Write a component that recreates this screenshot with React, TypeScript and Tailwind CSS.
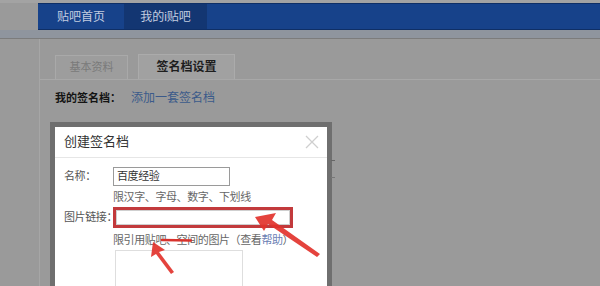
import React from 'react';

const font = { fontFamily: '"Liberation Sans", "Noto Sans CJK SC", sans-serif' };

const Arrows: React.FC = () => (
  <svg className="absolute left-0 top-0 pointer-events-none" width="600" height="286" viewBox="0 0 600 286">
    {/* arrow to the image link input */}
    <path d="M255 217 L276 213 L272 220 L320 254 L317 257 L268 224 L264 231 Z" fill="#e2332c" opacity="0.92" />
    {/* arrow to the hint text */}
    <path d="M153 242 L165 250 L159 252 L174 272 L171 274 L156 254 L151 257 Z" fill="#e2332c" opacity="0.92" />
    {/* strike over the word */}
    <path d="M162 240 L191 240.5" stroke="#d8322c" strokeWidth="2.4" fill="none" strokeLinecap="round" />
  </svg>
);

const App: React.FC = () => {
  return (
    <div className="relative w-[600px] h-[286px] overflow-hidden bg-[#9a9a9a]" style={font}>
      {/* top nav */}
      <div className="h-[3px] bg-[#a3a3a3]" />
      <div className="flex h-[27px] ml-[38px] bg-[#17428a] border-y border-[#0f2f66]">
        <div className="w-[86px] flex items-center justify-center text-[12px] text-[#c3cde0]">贴吧首页</div>
        <div className="w-[83px] flex items-center justify-center text-[12px] text-[#c3cde0] bg-[#133672]">我的i贴吧</div>
      </div>
      <div className="h-[9px] bg-[#8f959e] border-b border-[#7c7c7c]" />

      {/* page content */}
      <div className="ml-[39px] h-full border-l border-[#a6a6a6] pt-[16px]">
        <div className="flex items-end pl-[15px] h-[25px] border-b border-[#a8a8a8] gap-[10px]">
          <div className="w-[73px] h-[24px] flex items-center justify-center bg-[#9d9d9d] border border-b-0 border-[#a9a9a9] text-[11px] text-[#7a7a7a]">
            基本资料
          </div>
          <div className="w-[97px] h-[25px] flex items-center justify-center bg-[#a1a1a1] border border-b-0 border-[#ababab] text-[12px] font-bold text-[#1e1e1e]">
            签名档设置
          </div>
        </div>
        <div className="flex items-center pl-[15px] mt-[10px] h-[16px] text-[11px] whitespace-nowrap">
          <span className="font-bold text-[#141414]">我的签名档：</span>
          <span className="ml-[10px] text-[12px] text-[#3b5a8a]">添加一套签名档</span>
        </div>
      </div>

      {/* dialog */}
      <div className="absolute left-[50px] top-[122px] w-[282px] h-[180px] bg-[#6f6f6f] p-[5px]">
        <div className="bg-white h-full">
          <div className="relative h-[31px] flex items-center pl-[9px] border-b border-[#e6e6e6]">
            <span className="text-[13px] text-[#333]">创建签名档</span>
            <svg className="absolute right-[8px] top-[8px]" width="14" height="14" viewBox="0 0 14 14">
              <path d="M1 1 L13 13 M13 1 L1 13" stroke="#cfcfcf" strokeWidth="1.3" />
            </svg>
          </div>
          <div className="pl-[9px] pt-[9px] text-[11px] tracking-[-0.4px] text-[#555] whitespace-nowrap">
            <div className="flex items-center">
              <span className="w-[49px] shrink-0">名称：</span>
              <div className="w-[117px] h-[19px] border border-[#9a9a9a] flex items-center px-[3px] text-[#333]">百度经验</div>
            </div>
            <div className="ml-[49px] mt-[2px] h-[19px] flex items-center text-[#666]">限汉字、字母、数字、下划线</div>
            <div className="flex items-center">
              <span className="w-[49px] shrink-0">图片链接：</span>
              <div className="w-[180px] h-[21px] border-[3px] border-[#c23a3c] bg-white">
                <div className="h-full border border-[#cfcfcf]" />
              </div>
            </div>
            <div className="ml-[49px] mt-[2px] h-[20px] flex items-center text-[#666]">
              限引用贴吧、空间的图片（查看<span className="text-[#6b80b3]">帮助</span>）
            </div>
            <div className="ml-[51px] w-[128px] h-[60px] border border-[#dedede]" />
          </div>
        </div>
      </div>

      {/* stray page marks to the right of the dialog */}
      <div className="absolute left-[331px] top-[160px] w-[4px] h-px bg-[#666]" />
      <div className="absolute left-[331px] top-[177px] w-[4px] h-px bg-[#777]" />

      <Arrows />
    </div>
  );
};

export default App;
